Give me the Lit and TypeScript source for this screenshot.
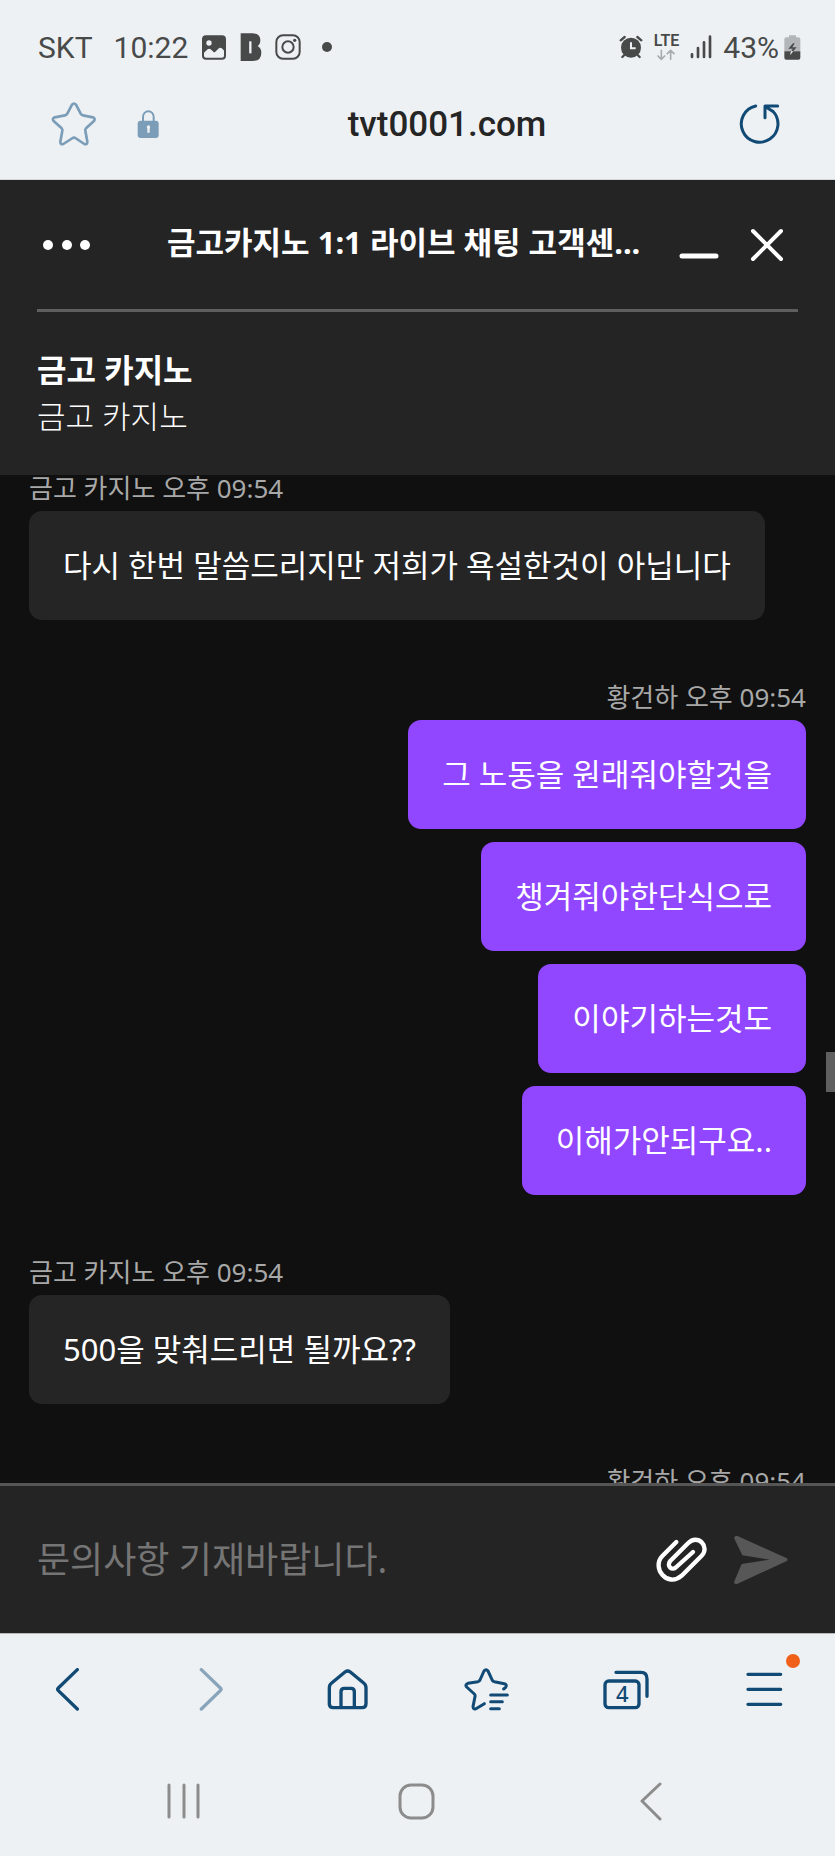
import { LitElement, html, css, svg } from "lit";
import { customElement, property, state } from "lit/decorators.js";
import { classMap } from "lit/directives/class-map.js";

interface Group {
  author: string;
  time: string;
  own: boolean;
  messages: string[];
}

const GROUPS: Group[] = [
  {
    author: "금고 카지노",
    time: "오후 09:54",
    own: false,
    messages: ["다시 한번 말씀드리지만 저희가 욕설한것이 아닙니다"],
  },
  {
    author: "황건하",
    time: "오후 09:54",
    own: true,
    messages: [
      "그 노동을 원래줘야할것을",
      "챙겨줘야한단식으로",
      "이야기하는것도",
      "이해가안되구요..",
    ],
  },
  {
    author: "금고 카지노",
    time: "오후 09:54",
    own: false,
    messages: ["500을 맞춰드리면 될까요??"],
  },
  { author: "황건하", time: "오후 09:54", own: true, messages: [] },
];

const icon = (w: number, h: number, box: string, body: unknown) => html`
  <svg width=${w} height=${h} viewBox=${box} fill="none" stroke-linecap="round"
    stroke-linejoin="round" aria-hidden="true">${body}</svg>`;

/* Status bar glyphs */
const pictureIcon = icon(26, 26, "603 102 78 78", svg`
  <rect x="609" y="109" width="66" height="67" rx="9" stroke="#484a49" stroke-width="6"/>
  <path d="M609 109h66v46l-8-9q-6-6-12 0l-9 9q-3 3-6 0l-8-7q-5-4-9 0l-14 13z" fill="#484a49"/>
  <circle cx="627" cy="129" r="8" fill="#edf1f4"/>`);
const boldIcon = icon(22, 28, "718 99 66 84", svg`
  <path d="M720 100h36q23 0 23 20 0 13-8 18 11 6 11 20 0 25-26 25h-36z" fill="#484a49"/>
  <path d="M749 124v36" stroke="#edf1f4" stroke-width="7" stroke-linecap="butt"/>`);
const cameraIcon = icon(26, 26, "820 104 78 78", svg`
  <rect x="824" y="108" width="70" height="70" rx="20" stroke="#484a49" stroke-width="6"/>
  <circle cx="859" cy="143" r="17" stroke="#484a49" stroke-width="6"/>
  <circle cx="879" cy="123" r="5" fill="#484a49"/>`);
const dotIcon = icon(10, 10, "0 0 10 10", svg`<circle cx="5" cy="5" r="5" fill="#484a49"/>`);
const alarmIcon = icon(24, 24, "611 105 72 72", svg`
  <circle cx="647" cy="143" r="30" fill="#484a49"/>
  <path d="M616 121l12-10M678 121l-12-10M627 165l-6 6M667 165l6 6" stroke="#484a49" stroke-width="7"/>
  <path d="M647 127v18h14" stroke="#edf1f4" stroke-width="6" stroke-linecap="butt" stroke-linejoin="miter"/>`);
const arrowsIcon = icon(18, 12, "730 146 54 36", svg`
  <path d="M743 150v27M733 167l10 10 10-10M771 177v-27M761 160l10-10 10 10"
    stroke="#a9acae" stroke-width="5"/>`);
const signalIcon = icon(22, 24, "823 105 66 72", svg`
  <path d="M829 163v8M847 144v27M865 127v44M883 110v61" stroke="#484a49" stroke-width="8"/>`);
const batteryIcon = icon(17, 25, "1103 104 51 75", svg`
  <path d="M1118 105h21v6h7q6 0 6 6v36h-48v-36q0-6 6-6h8z" fill="#b3b6b8"/>
  <path d="M1104 153h48v19q0 6-6 6h-36q-6 0-6-6z" fill="#484a49"/>
  <path d="M1130 129l-14 16h13l-9 19 21-23h-13l7-12z" fill="#484a49"/>
  <path d="M1124 153h7l-10 12z" fill="#edf1f4"/>`);

/* Address bar glyphs */
const starIcon = icon(46, 44, "154 305 138 132", svg`
  <path d="M217 313Q223 306 229 313L243 340Q245 344 250 345L280 351Q288 354 283 362L259 384Q256 387 257 391L263 424Q263 434 254 431L227 413Q223 411 219 413L191 431Q182 434 182 424L188 391Q189 387 186 384L161 361Q157 354 165 351L196 345Q201 344 203 340Z"
    stroke="#7b9db7" stroke-width="8"/>`);
const lockIcon = icon(22, 30, "412 327 66 90", svg`
  <path d="M430 364v-14a16 16 0 0 1 32 0v14" stroke="#7b9db7" stroke-width="6"/>
  <rect x="414" y="362" width="63" height="52" rx="9" fill="#7b9db7"/>
  <path d="M446 376a6 6 0 0 1 4 10v12h-7v-12a6 6 0 0 1 3-10z" fill="#edf1f4"/>`);
const reloadIcon = icon(42, 42, "969 308 126 126", svg`
  <path d="M1019 317A55 55 0 1 0 1070 332M1047 352V317M1047 317H1085M1050 320L1072 334"
    stroke="#114a75" stroke-width="9"/>`);

/* Chat header glyphs */
const moreIcon = icon(60, 40, "0 0 60 40", svg`
  <g fill="#fff"><circle cx="11" cy="20" r="5"/><circle cx="30" cy="20" r="5"/><circle cx="48" cy="20" r="5"/></g>`);
const minimizeIcon = icon(40, 40, "0 0 40 40", svg`
  <path d="M3 31h34" stroke="#fff" stroke-width="5"/>`);
const closeIcon = icon(40, 40, "0 0 40 40", svg`
  <path d="M5 6l28 28M33 6L5 34" stroke="#fff" stroke-width="4"/>`);

/* Composer glyphs */
const clipIcon = icon(52, 46, "233 293 156 138", svg`
  <path d="M294 308L252 350C218 386 268 446 310 409L370 349C396 322 358 282 329 312L275 366C264 380 281 396 294 383L344 338"
    stroke="#fff" stroke-width="13"/>`);
const sendIcon = icon(56, 50, "462 285 168 150", svg`
  <path d="M474 287L622 354Q630 359 622 364L474 432Q463 433 466 424L488 372L572 359L490 346L466 296Q464 288 474 287Z" fill="#575757"/>`);

/* Browser toolbar glyphs */
const backIcon = icon(48, 44, "137 113 144 132", svg`
  <path d="M231 118L174 173Q170 177 174 181L231 236" stroke="#114a75" stroke-width="10"/>`);
const forwardIcon = icon(48, 44, "555 113 144 132", svg`
  <path d="M604 118L661 173Q665 177 661 181L604 236" stroke="#88a5bb" stroke-width="10"/>`);
const homeIcon = icon(42, 42, "982 116 126 126", svg`
  <path d="M989 223V172Q989 163 996 158L1036 125Q1044 119 1052 125L1092 158Q1099 163 1099 172V220Q1099 232 1087 232H1001Q989 232 989 220M1024 231V184Q1024 174 1034 174H1054Q1064 174 1064 184V231"
    stroke="#114a75" stroke-width="10"/>`);
const bookmarksIcon = icon(46, 44, "142 113 138 132", svg`
  <path d="M261 176L267 171Q272 162 263 160L233 154Q229 153 227 150L214 122Q208 114 202 122L190 149Q188 153 184 154L154 159Q144 163 150 170L173 191Q176 194 175 199L169 229Q170 239 178 235L203 220"
    stroke="#114a75" stroke-width="9"/>
  <path d="M222 194h50M222 214h35M222 235h26" stroke="#114a75" stroke-width="9"/>`);
const tabsIcon = icon(46, 42, "560 116 138 126", svg`
  <rect x="566" y="152" width="102" height="80" rx="11" stroke="#114a75" stroke-width="10"/>
  <path d="M599 126H674Q692 126 692 146V198" stroke="#114a75" stroke-width="10"/>`);
const menuIcon = icon(38, 40, "990 119 114 120", svg`
  <path d="M996 132h98M996 177h98M996 222h98" stroke="#114a75" stroke-width="10"/>`);

/* System navigation glyphs */
const recentsIcon = icon(40, 40, "0 0 40 40", svg`
  <path d="M5 4v32M20 4v32M34 4v32" stroke="#8c8c8c" stroke-width="3"/>`);
const homeKeyIcon = icon(40, 40, "0 0 40 40", svg`
  <rect x="3" y="4" width="33" height="33" rx="11" stroke="#8c8c8c" stroke-width="3"/>`);
const backKeyIcon = icon(40, 40, "0 0 40 40", svg`
  <path d="M29 3L11 20l18 18" stroke="#8c8c8c" stroke-width="3"/>`);

@customElement("message-group")
class MessageGroup extends LitElement {
  @property({ attribute: false }) group!: Group;

  static styles = css`
    :host {
      display: block;
    }
    .group {
      display: flex;
      flex-direction: column;
      align-items: flex-start;
      gap: 13px;
    }
    .own {
      align-items: flex-end;
    }
    .meta {
      margin-bottom: -3px;
      color: #a8a8a8;
      font-size: 26px;
      line-height: 26px;
      white-space: nowrap;
    }
    .bubble {
      margin: 0;
      padding: 32px 34px;
      border-radius: 13px;
      background: #252525;
      color: #fff;
      font-size: 31px;
      line-height: 45px;
    }
    .own .bubble {
      background: #9146ff;
    }
  `;

  render() {
    const g = this.group;
    return html`
      <div class=${classMap({ group: true, own: g.own })}>
        <div class="meta">${g.author} ${g.time}</div>
        ${g.messages.map((m) => html`<p class="bubble">${m}</p>`)}
      </div>`;
  }
}

@customElement("app-root")
class AppRoot extends LitElement {
  @state() private draft = "";

  static styles = css`
    :host {
      display: flex;
      flex-direction: column;
      height: 100vh;
      overflow: hidden;
      background: #101010;
      font-family: "Noto Sans", "Noto Sans CJK KR", sans-serif;
    }
    svg {
      display: block;
      flex: none;
    }
    button {
      display: flex;
      align-items: center;
      justify-content: center;
      margin: 0;
      padding: 0;
      border: 0;
      background: none;
      font: inherit;
      color: inherit;
      cursor: pointer;
    }
    .chrome {
      flex: none;
      padding-bottom: 25px;
      border-bottom: 1px solid #d4d7da;
      background: #edf1f4;
      font-family: Roboto, sans-serif;
    }
    .status {
      display: flex;
      align-items: center;
      justify-content: space-between;
      height: 94px;
      padding: 0 34px 0 38px;
      color: #484a49;
      font-size: 30px;
    }
    .status-side {
      display: flex;
      align-items: center;
      gap: 13px;
    }
    .status-end {
      gap: 11px;
    }
    .clock {
      margin-left: 8px;
    }
    .dot {
      margin-left: 8px;
    }
    .network {
      display: flex;
      flex-direction: column;
      align-items: center;
      gap: 1px;
      font-size: 16px;
      font-weight: 600;
      line-height: 14px;
    }
    .battery {
      display: flex;
      align-items: center;
      gap: 5px;
    }
    .address {
      display: flex;
      align-items: center;
      height: 60px;
      padding: 0 50px 0 51px;
    }
    .address-side {
      display: flex;
      align-items: center;
      gap: 40px;
    }
    .reload {
      width: 50px;
      height: 50px;
    }
    .url {
      flex: 1;
      color: #252525;
      font-size: 35px;
      font-weight: 500;
      text-align: center;
    }
    .head {
      flex: none;
      padding: 0 37px;
      background: #242424;
      color: #fff;
    }
    .head-row {
      display: flex;
      align-items: center;
      height: 129px;
      border-bottom: 3px solid #5f5f5f;
    }
    .title {
      flex: 1;
      min-width: 0;
      margin: 0;
      padding: 0 0 6px 70px;
      overflow: hidden;
      font-size: 31px;
      line-height: 44px;
      font-weight: 700;
      white-space: nowrap;
      text-overflow: ellipsis;
    }
    .window-keys {
      display: flex;
      gap: 9px;
    }
    .window-keys button {
      width: 60px;
      height: 60px;
    }
    .agent {
      padding: 35px 0 36px;
      line-height: 46px;
    }
    .agent-name {
      margin: 0;
      font-size: 32px;
      line-height: 46px;
      font-weight: 700;
    }
    .agent-role {
      margin: 0;
      font-size: 31px;
      font-weight: 300;
    }
    .chat {
      position: relative;
      display: flex;
      flex: 1;
      flex-direction: column;
      gap: 64px;
      min-height: 0;
      padding: 0 29px;
      overflow: hidden;
    }
    .chat message-group {
      flex: none;
    }
    .thumb {
      position: absolute;
      top: 57.2%;
      right: 0;
      width: 9px;
      height: 40px;
      background: #5f5f5f;
    }
    .composer {
      display: flex;
      flex: none;
      align-items: center;
      gap: 25px;
      height: 147px;
      padding: 0 46px 0 37px;
      border-top: 3px solid #555;
      background: #242424;
    }
    .field {
      flex: 1;
      min-width: 0;
      height: 60px;
      padding: 0;
      border: 0;
      outline: 0;
      background: none;
      color: #fff;
      font-family: inherit;
      font-size: 36px;
    }
    .field::placeholder {
      color: #757575;
      opacity: 1;
    }
    .bottom {
      flex: none;
      border-top: 1px solid #b8b8b8;
      background: #edf1f4;
    }
    .tools,
    .keys {
      display: grid;
      grid-template-columns: repeat(6, 1fr);
      height: 111px;
    }
    .keys {
      grid-template-columns: repeat(3, 1fr);
      padding: 0 67px;
    }
    .anchor {
      position: relative;
    }
    .count {
      position: absolute;
      top: 11px;
      left: 2px;
      width: 34px;
      color: #114a75;
      font-size: 22px;
      font-weight: 500;
      line-height: 26px;
      text-align: center;
    }
    .badge {
      position: absolute;
      top: -16px;
      right: -16px;
      width: 14px;
      height: 14px;
      border-radius: 50%;
      background: #f06018;
    }
  `;

  render() {
    return html`
      <header class="chrome">
        <div class="status">
          <div class="status-side">
            <span>SKT</span>
            <span class="clock">10:22</span>
            ${pictureIcon}${boldIcon}${cameraIcon}
            <span class="dot">${dotIcon}</span>
          </div>
          <div class="status-side status-end">
            ${alarmIcon}
            <span class="network"><span>LTE</span>${arrowsIcon}</span>
            ${signalIcon}
            <span class="battery"><span>43%</span>${batteryIcon}</span>
          </div>
        </div>
        <div class="address">
          <div class="address-side">
            <button aria-label="북마크 추가">${starIcon}</button>
            <button aria-label="보안 연결">${lockIcon}</button>
          </div>
          <div class="url">tvt0001.com</div>
          <button class="reload" aria-label="새로고침">${reloadIcon}</button>
        </div>
      </header>

      <section class="head">
        <div class="head-row">
          <button aria-label="더보기">${moreIcon}</button>
          <h1 class="title">금고카지노 1:1 라이브 채팅 고객센...</h1>
          <div class="window-keys">
            <button aria-label="최소화">${minimizeIcon}</button>
            <button aria-label="닫기">${closeIcon}</button>
          </div>
        </div>
        <div class="agent">
          <h2 class="agent-name">금고 카지노</h2>
          <p class="agent-role">금고 카지노</p>
        </div>
      </section>

      <main class="chat">
        ${GROUPS.map((g) => html`<message-group .group=${g}></message-group>`)}
        <div class="thumb"></div>
      </main>

      <form class="composer" @submit=${(e: Event) => e.preventDefault()}>
        <input class="field" type="text" aria-label="메시지" placeholder="문의사항 기재바랍니다."
          .value=${this.draft}
          @input=${(e: Event) => (this.draft = (e.target as HTMLInputElement).value)} />
        <button type="button" aria-label="파일 첨부">${clipIcon}</button>
        <button type="submit" aria-label="보내기">${sendIcon}</button>
      </form>

      <footer class="bottom">
        <nav class="tools" aria-label="브라우저">
          <button aria-label="뒤로">${backIcon}</button>
          <button aria-label="앞으로">${forwardIcon}</button>
          <button aria-label="홈">${homeIcon}</button>
          <button aria-label="북마크">${bookmarksIcon}</button>
          <button aria-label="탭">
            <span class="anchor">${tabsIcon}<span class="count">4</span></span>
          </button>
          <button aria-label="메뉴">
            <span class="anchor">${menuIcon}<span class="badge"></span></span>
          </button>
        </nav>
        <nav class="keys" aria-label="시스템">
          <button aria-label="최근 앱">${recentsIcon}</button>
          <button aria-label="홈 화면">${homeKeyIcon}</button>
          <button aria-label="이전">${backKeyIcon}</button>
        </nav>
      </footer>`;
  }
}
